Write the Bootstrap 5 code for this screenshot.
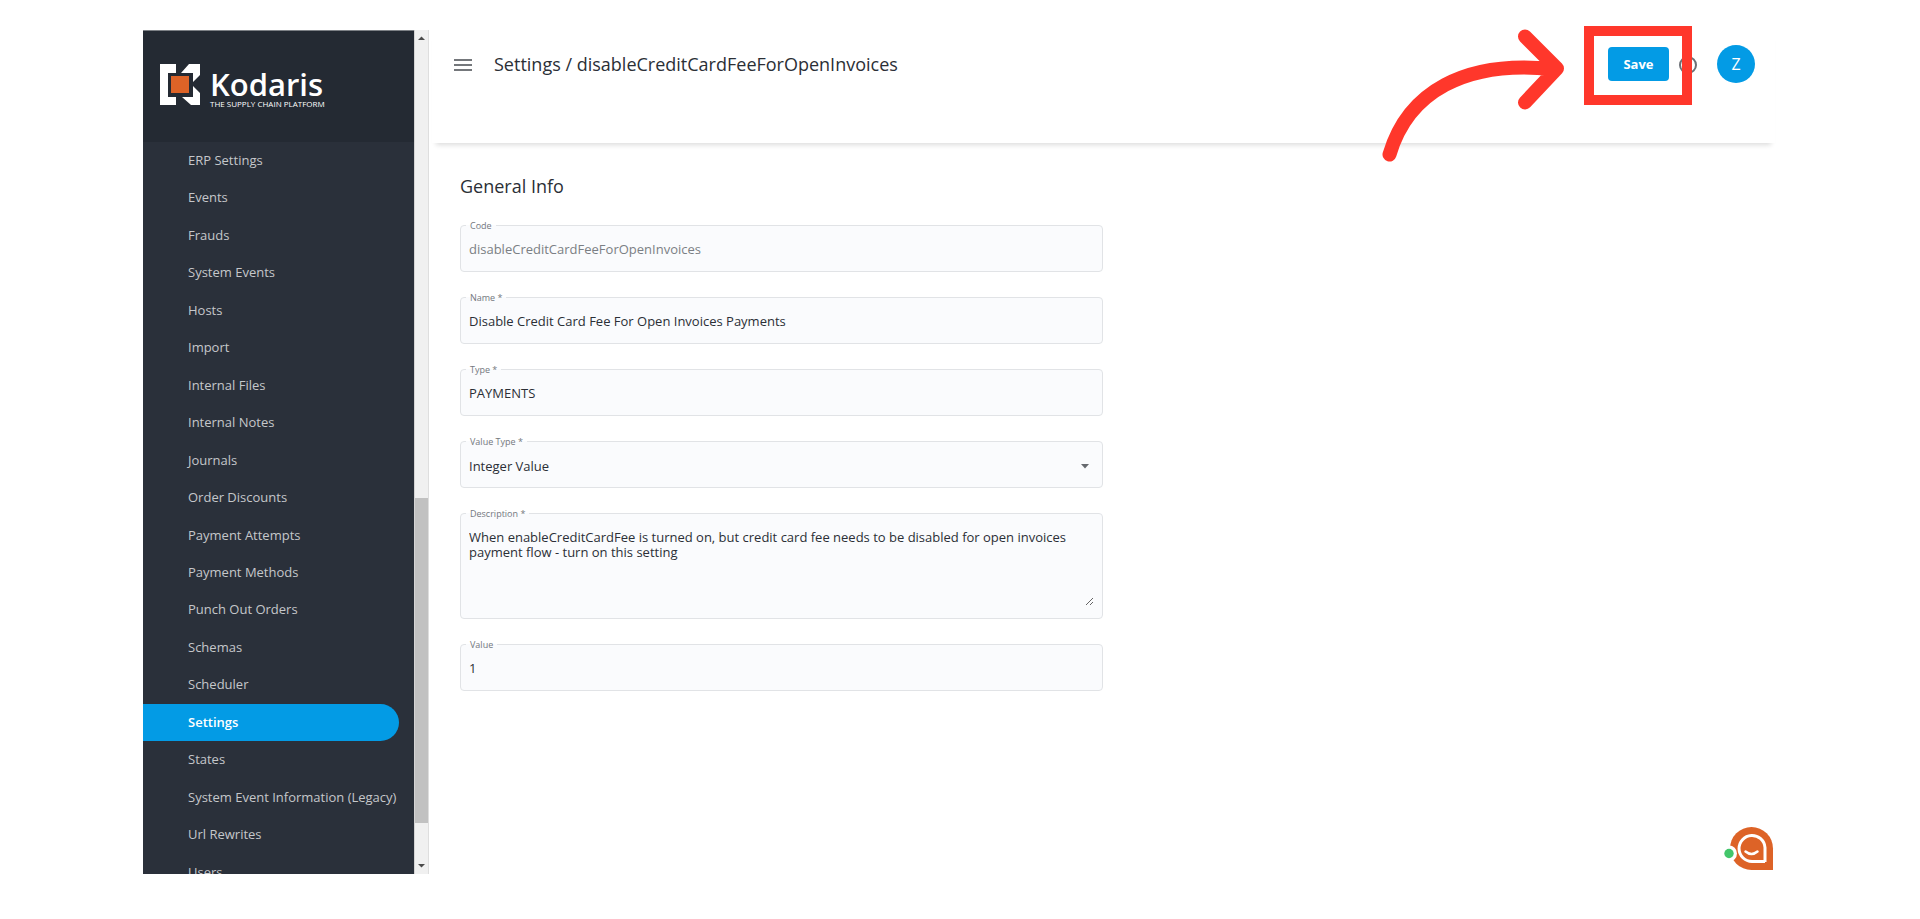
<!DOCTYPE html>
<html lang="en">
<head>
<meta charset="utf-8">
<meta name="viewport" content="width=device-width, initial-scale=1">
<title>Settings / disableCreditCardFeeForOpenInvoices</title>
<link href="https://cdn.jsdelivr.net/npm/bootstrap@5.3.0/dist/css/bootstrap.min.css" rel="stylesheet">
<style>
  :root { --brand: #039be5; --ink: #2b2f36; --annot: #ff372b; }
  body { font-family: "Open Sans", "Noto Sans", sans-serif; font-size: 13px; color: var(--ink); background: #fff; }
  .stage { height: 100vh; padding: 30px 145px 45px 143px; }
  .sidebar { width: 271px; background: #2a303a; border-top: 1px solid #7d8186; }
  .brand-bar { height: 111px; background: #242a33; padding: 33px 17px 0; }
  .brand-text { margin-left: 10px; }
  .brand-name { font-size: 31px; line-height: 32px; font-weight: 600; }
  .brand-tag { font-size: 8px; line-height: 8px; font-weight: 500; }
  .side-list { height: 749px; }
  .side-list .nav-link { color: #c5c7ca; font-weight: 500; padding: 0 0 0 45px; margin-right: 15px; border-radius: 0 20px 20px 0; white-space: nowrap; }
  .side-list .nav-link.active { background: var(--brand); color: #fff; font-weight: 600; }
  .scroller { width: 15px; background: #f0f0f0; border-left: 1px solid #d4d4d4; border-right: 1px solid #dedede; }
  .scroller svg { height: 16px; width: 13px; }
  .thumb { background: #c1c1c1; flex: 325 1 0; }
  .rest-above { flex: 451 1 0; }
  .rest-below { flex: 35 1 0; }
  .top-bar { height: 113px; padding: 14px 20px 0 22px; margin-left: 3px; box-shadow: 0 6px 5px -4px rgba(0,0,0,.14); }
  .bar-row { height: 40px; }
  .page-title { font-size: 18px; line-height: 24px; font-weight: 400; margin: 0 0 0 22px; }
  .icon-btn { border: 0; background: none; padding: 0; line-height: 0; }
  .help-btn { margin-left: 8px; margin-right: 18px; }
  .btn-save { background: var(--brand); color: #fff; font-size: 13px; line-height: 18px; font-weight: 700; width: 61px; height: 34px; padding: 0; border: 0; border-radius: 4px; }
  .save-frame { position: absolute; inset: -21px -23px -24px -24px; border: 10px solid var(--annot); z-index: 2; pointer-events: none; }
  .annot-arrow { position: absolute; right: 100%; top: -28px; margin-right: 43px; z-index: 2; pointer-events: none; }
  .avatar { width: 38px; height: 38px; border-radius: 50%; background: var(--brand); color: #fff; font-size: 16px; border: 0; padding: 0; }
  .form-area { padding: 31px 31px 0; max-width: 705px; }
  .section-title { font-size: 18px; line-height: 24px; font-weight: 400; margin: 0 0 27px; }
  .field-stack { gap: 25px; }
  .field { position: relative; border: 1px solid #e1e3e6; border-radius: 4px; background: #fafbfd; height: 47px; }
  .field-tall { height: 106px; padding: 16px 8px 12px 8px; }
  .field > label { position: absolute; left: 5px; top: -7px; padding: 0 4px; font-size: 9px; line-height: 14px; color: #74787e; background: linear-gradient(#fff 6px, #fafbfd 6px); z-index: 1; }
  .field .form-control, .field .form-select { height: 45px; border: 0; background-color: transparent; font-size: 13px; line-height: 16px; color: var(--ink); padding: 0 8px; border-radius: 0; }
  .field .form-control:disabled { color: #7b7f84; }
  .field .form-select { background-image: none; padding-top: 2px; }
  .field textarea.form-control { height: 76px; min-height: 0; padding: 0; line-height: 15px; overflow: hidden; }
  .caret { position: absolute; right: 13px; top: 22px; pointer-events: none; }
  .chat { position: absolute; right: 1px; bottom: 3px; }
</style>
</head>
<body>
<div class="stage">
  <div class="d-flex h-100 position-relative">
    <aside class="sidebar d-flex flex-column flex-shrink-0 overflow-hidden">
      <div class="brand-bar d-flex align-items-start flex-shrink-0 text-white">
        <svg width="40" height="41" viewBox="0 0 40 41" aria-hidden="true">
          <path fill="#fff" d="M0 0H16V9H8V33H16V41H0ZM29 0H40V11L33 18V9H21ZM33 22L40 29V41H31L22 33H33Z"/>
          <rect x="11" y="12" width="18" height="17" fill="#dd6327"/>
        </svg>
        <div class="brand-text pt-1">
          <div class="brand-name">Kodaris</div>
          <div class="brand-tag">THE SUPPLY CHAIN PLATFORM</div>
        </div>
      </div>
      <nav class="flex-fill overflow-hidden" aria-label="Main">
        <div class="side-list nav flex-column flex-nowrap">
          <a class="nav-link flex-fill d-flex align-items-center" href="#">ERP Settings</a>
          <a class="nav-link flex-fill d-flex align-items-center" href="#">Events</a>
          <a class="nav-link flex-fill d-flex align-items-center" href="#">Frauds</a>
          <a class="nav-link flex-fill d-flex align-items-center" href="#">System Events</a>
          <a class="nav-link flex-fill d-flex align-items-center" href="#">Hosts</a>
          <a class="nav-link flex-fill d-flex align-items-center" href="#">Import</a>
          <a class="nav-link flex-fill d-flex align-items-center" href="#">Internal Files</a>
          <a class="nav-link flex-fill d-flex align-items-center" href="#">Internal Notes</a>
          <a class="nav-link flex-fill d-flex align-items-center" href="#">Journals</a>
          <a class="nav-link flex-fill d-flex align-items-center" href="#">Order Discounts</a>
          <a class="nav-link flex-fill d-flex align-items-center" href="#">Payment Attempts</a>
          <a class="nav-link flex-fill d-flex align-items-center" href="#">Payment Methods</a>
          <a class="nav-link flex-fill d-flex align-items-center" href="#">Punch Out Orders</a>
          <a class="nav-link flex-fill d-flex align-items-center" href="#">Schemas</a>
          <a class="nav-link flex-fill d-flex align-items-center" href="#">Scheduler</a>
          <a class="nav-link flex-fill d-flex align-items-center active" aria-current="page" href="#">Settings</a>
          <a class="nav-link flex-fill d-flex align-items-center" href="#">States</a>
          <a class="nav-link flex-fill d-flex align-items-center" href="#">System Event Information (Legacy)</a>
          <a class="nav-link flex-fill d-flex align-items-center" href="#">Url Rewrites</a>
          <a class="nav-link flex-fill d-flex align-items-center" href="#">Users</a>
        </div>
      </nav>
    </aside>

    <div class="scroller d-flex flex-column flex-shrink-0" aria-hidden="true">
      <svg viewBox="0 0 13 16"><path d="M3 10L6.500 6.500L10 10Z" fill="#4a4a4a"/></svg>
      <div class="rest-above"></div>
      <div class="thumb"></div>
      <div class="rest-below"></div>
      <svg viewBox="0 0 13 16"><path d="M3 6L6.500 9.500L10 6Z" fill="#4a4a4a"/></svg>
    </div>

    <div class="flex-fill">
      <header class="top-bar">
        <div class="bar-row d-flex align-items-center">
          <button class="icon-btn" type="button" aria-label="Toggle menu">
            <svg width="18" height="14" viewBox="0 0 18 14" stroke="#74777b" stroke-width="2"><path d="M0 3H18M0 8H18M0 13H18"/></svg>
          </button>
          <h1 class="page-title">Settings / disableCreditCardFeeForOpenInvoices</h1>
          <div class="position-relative ms-auto">
            <button class="btn-save d-block" type="button">Save</button>
            <div class="save-frame"></div>
            <svg class="annot-arrow" width="190" height="150" viewBox="0 0 190 150" fill="none" stroke="#ff372b" stroke-width="14" stroke-linecap="round" stroke-linejoin="round" aria-hidden="true">
              <path d="M14.500 135.500C33 73 90 41 177 50M150 17.500L182 49.500L150 83.500"/>
            </svg>
          </div>
          <button class="icon-btn help-btn" type="button" aria-label="Help">
            <svg width="22" height="22" viewBox="0 0 22 22" fill="none" stroke="#6b6f75" stroke-width="2"><circle cx="11" cy="12" r="8"/><path d="M9 10a2 2 0 1 1 2 2v2"/></svg>
          </button>
          <button class="avatar" type="button">Z</button>
        </div>
      </header>

      <main class="form-area">
        <h2 class="section-title">General Info</h2>
        <form class="field-stack d-grid">
          <div class="field">
            <label for="code">Code</label>
            <input class="form-control" id="code" type="text" value="disableCreditCardFeeForOpenInvoices" disabled>
          </div>
          <div class="field">
            <label for="name">Name *</label>
            <input class="form-control" id="name" type="text" value="Disable Credit Card Fee For Open Invoices Payments">
          </div>
          <div class="field">
            <label for="type">Type *</label>
            <input class="form-control" id="type" type="text" value="PAYMENTS">
          </div>
          <div class="field">
            <label for="valueType">Value Type *</label>
            <select class="form-select" id="valueType"><option>Integer Value</option></select>
            <svg class="caret" width="8" height="5" viewBox="0 0 8 5" aria-hidden="true"><path d="M0 0H8L4 4.500Z" fill="#66696e"/></svg>
          </div>
          <div class="field field-tall">
            <label for="description">Description *</label>
            <textarea class="form-control" id="description">When enableCreditCardFee is turned on, but credit card fee needs to be disabled for open invoices payment flow - turn on this setting</textarea>
          </div>
          <div class="field">
            <label for="value">Value</label>
            <input class="form-control" id="value" type="text" value="1">
          </div>
        </form>
      </main>
    </div>

    <button class="icon-btn chat" type="button" aria-label="Open chat">
      <svg width="50" height="46" viewBox="0 0 50 46">
        <path d="M49 45V23.500A21.500 21.500 0 1 0 27.500 45Z" fill="#dd6327"/>
        <path d="M41 37V22.500A13 13 0 1 0 28 36.500H41Z" fill="none" stroke="#fff" stroke-width="3"/>
        <path d="M21.500 26.500Q27.500 31.500 33.500 26.500" fill="none" stroke="#fff" stroke-width="2.500" stroke-linecap="round"/>
        <circle cx="5" cy="28.500" r="8" fill="#fff"/>
        <circle cx="5" cy="28.500" r="4.700" fill="#43c66b"/>
      </svg>
    </button>
  </div>
</div>
<script src="https://cdn.jsdelivr.net/npm/bootstrap@5.3.0/dist/js/bootstrap.bundle.min.js"></script>
</body>
</html>
